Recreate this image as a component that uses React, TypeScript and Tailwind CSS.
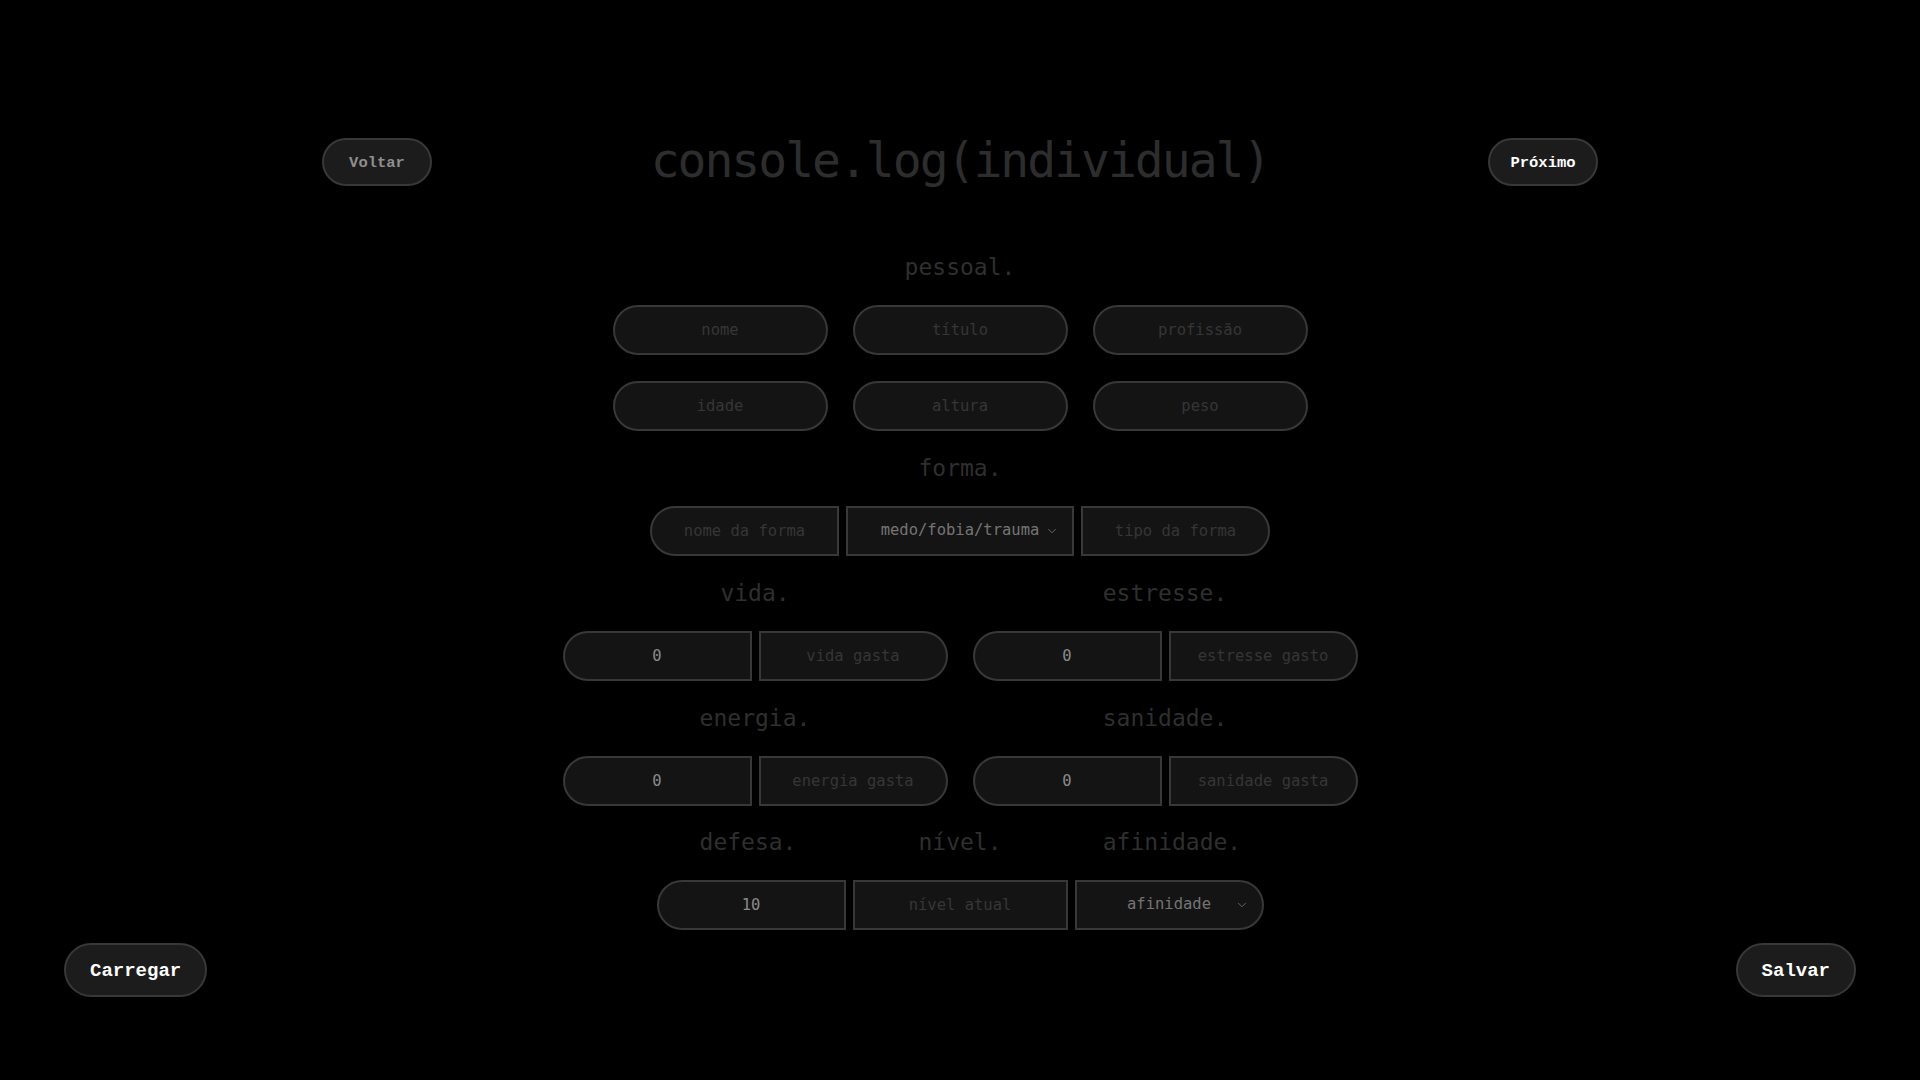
import { ChevronDown } from "lucide-react";

const field =
  "h-[50px] bg-[#141414] border-2 border-[#383838] text-center text-[15.5px] text-[#8a8a8a] placeholder:text-[#363636] outline-none font-['DejaVu_Sans_Mono',monospace]";

const label =
  "text-[23px] leading-[28px] text-[#2f2f2f] font-['DejaVu_Sans_Mono',monospace] text-center";

function Select({ value, className }: { value: string; className: string }) {
  return (
    <div className={`${field} relative flex items-center justify-center text-[#747474] ${className}`}>
      <span>{value}</span>
      <ChevronDown className="absolute right-[13px] top-1/2 -translate-y-1/2 w-[14px] h-[14px] text-[#707070]" strokeWidth={1.5} />
    </div>
  );
}

function Pair({ title, placeholder }: { title: string; placeholder: string }) {
  return (
    <div className="flex flex-col items-center">
      <div className={`${label} mb-[24px]`}>{title}</div>
      <div className="flex gap-[7px]">
        <input className={`${field} w-[189px] rounded-l-full`} defaultValue="0" />
        <input className={`${field} w-[189px] rounded-r-full`} placeholder={placeholder} />
      </div>
    </div>
  );
}

export default function App() {
  const btn =
    "bg-[#1c1c1c] border-2 border-[#383838] rounded-full font-bold font-['Liberation_Mono',monospace] flex items-center justify-center leading-none";

  return (
    <div className="min-h-screen bg-black flex flex-col">
      {/* Header */}
      <div className="mx-auto w-[1276px] pt-[132px] flex items-center justify-between">
        <button className={`${btn} w-[110px] h-[48px] mt-[4px] pt-[3px] text-[15.5px] text-[#8e8e8e]`}>Voltar</button>
        <h1 className="text-[48px] leading-[56px] tracking-[-2px] text-[#2d2d2d] font-['DejaVu_Sans_Mono',monospace]">
          console.log(individual)
        </h1>
        <button className={`${btn} w-[110px] h-[48px] mt-[4px] pt-[3px] text-[15.5px] text-white`}>Próximo</button>
      </div>

      {/* Form */}
      <div className="flex flex-col items-center mt-[65px]">
        <div className={`${label} mb-[24px]`}>pessoal.</div>
        <div className="grid grid-cols-[215px_215px_215px] gap-x-[25px] gap-y-[26px]">
          {["nome", "título", "profissão", "idade", "altura", "peso"].map((p) => (
            <input key={p} className={`${field} w-[215px] rounded-full`} placeholder={p} />
          ))}
        </div>

        <div className={`${label} mt-[23px] mb-[24px]`}>forma.</div>
        <div className="flex gap-[7px]">
          <input className={`${field} w-[189px] rounded-l-full`} placeholder="nome da forma" />
          <Select value="medo/fobia/trauma" className="w-[228px]" />
          <input className={`${field} w-[189px] rounded-r-full`} placeholder="tipo da forma" />
        </div>

        <div className="flex gap-[25px] mt-[23px]">
          <Pair title="vida." placeholder="vida gasta" />
          <Pair title="estresse." placeholder="estresse gasto" />
        </div>

        <div className="flex gap-[25px] mt-[23px]">
          <Pair title="energia." placeholder="energia gasta" />
          <Pair title="sanidade." placeholder="sanidade gasta" />
        </div>

        <div className="grid grid-cols-[189px_215px_189px] gap-x-[7px] mt-[22px]">
          <div className={`${label} mb-[24px] pr-[6px]`}>defesa.</div>
          <div className={`${label} mb-[24px]`}>nível.</div>
          <div className={`${label} mb-[24px] pl-[6px]`}>afinidade.</div>
          <input className={`${field} rounded-l-full`} defaultValue="10" />
          <input className={field} placeholder="nível atual" />
          <Select value="afinidade" className="rounded-r-full" />
        </div>
      </div>

      {/* Footer */}
      <div className="flex justify-between px-[64px] mt-[13px]">
        <button className={`${btn} h-[54px] px-6 pt-[2px] text-[19px] text-white`}>Carregar</button>
        <button className={`${btn} h-[54px] px-6 pt-[2px] text-[19px] text-white`}>Salvar</button>
      </div>
    </div>
  );
}
